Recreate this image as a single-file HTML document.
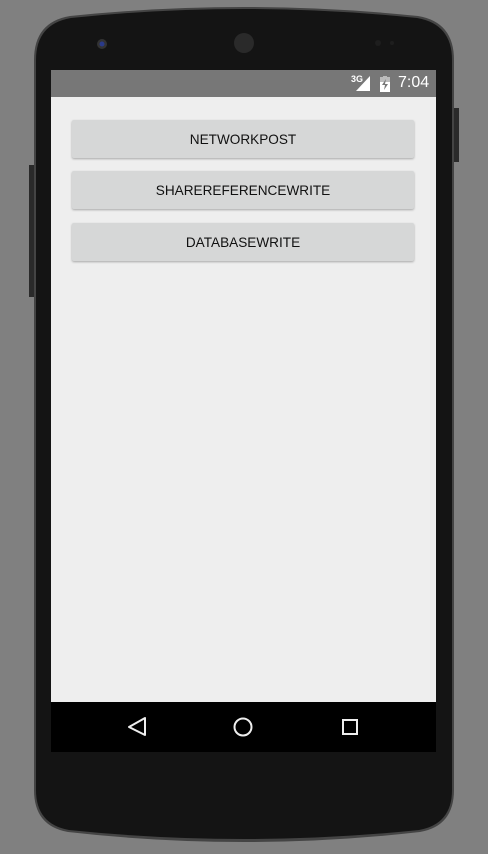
<!DOCTYPE html>
<html><head><style>
body{margin:0;width:488px;height:854px;background:#808080;position:relative;overflow:hidden;font-family:"Liberation Sans",sans-serif}
.a{position:absolute}
.btn{position:absolute;left:72px;width:342px;height:38px;background:#d6d7d7;border-radius:2px;box-shadow:0 1px 2px rgba(0,0,0,.3);font-size:13.6px;color:#111;text-align:center;line-height:40px;letter-spacing:0}
</style></head><body>
<svg class="a" style="left:0;top:0" width="488" height="854">
<rect x="454" y="108" width="5" height="54" fill="#2a2a2a"/>
<rect x="29" y="165" width="6" height="132" fill="#2a2a2a"/>
<path d="M34 60 Q34 22 70 16 Q244 -2 418 16 Q454 22 454 60 L454 790 Q454 826 420 832 Q244 852 68 832 Q34 826 34 790 Z" fill="#444"/>
<path d="M36 60 Q36 24 71 18 Q244 0 417 18 Q452 24 452 60 L452 790 Q452 824 419 830 Q244 848 69 830 Q36 824 36 790 Z" fill="#141414"/>
<circle cx="102" cy="44" r="5" fill="#333"/><circle cx="102" cy="44" r="2.5" fill="#2a3a8a"/>
<circle cx="244" cy="43" r="10" fill="#2a2a2a"/>
<circle cx="378" cy="43" r="3" fill="#1e1e1e"/><circle cx="392" cy="43" r="2" fill="#1e1e1e"/>
</svg>
<div class="a" style="left:51px;top:70px;width:385px;height:27px;background:#777"></div>
<div class="a" style="left:351px;top:74px;color:#fff;font-size:9px;font-weight:bold">3G</div>
<svg class="a" style="left:356px;top:76px" width="40" height="16"><path d="M0 15 L14 0 L14 15 Z" fill="#fff"/><rect x="24" y="1" width="10" height="15" fill="#fff"/><rect x="24" y="1" width="10" height="5" fill="#bbb"/><rect x="27" y="0" width="4" height="2" fill="#bbb"/><path d="M30 3 L26 9 L29 9 L28 14 L32 8 L29 8 Z" fill="#777"/></svg>
<div class="a" style="left:398px;top:74px;color:#fff;font-size:16px">7:04</div>
<div class="a" style="left:51px;top:97px;width:385px;height:605px;background:#eeeeee"></div>
<div class="btn" style="top:120px">NETWORKPOST</div>
<div class="btn" style="top:171px">SHAREREFERENCEWRITE</div>
<div class="btn" style="top:223px">DATABASEWRITE</div>
<div class="a" style="left:51px;top:702px;width:385px;height:50px;background:#000"></div>
<svg class="a" style="left:51px;top:702px" width="385" height="50">
<path d="M94 16 L94 33 L78 25 Z" fill="none" stroke="#eee" stroke-width="2" stroke-linejoin="round"/>
<circle cx="192" cy="25" r="8.5" fill="none" stroke="#eee" stroke-width="2"/>
<rect x="292" y="18" width="14" height="14" fill="none" stroke="#eee" stroke-width="2"/>
</svg>
</body></html>
